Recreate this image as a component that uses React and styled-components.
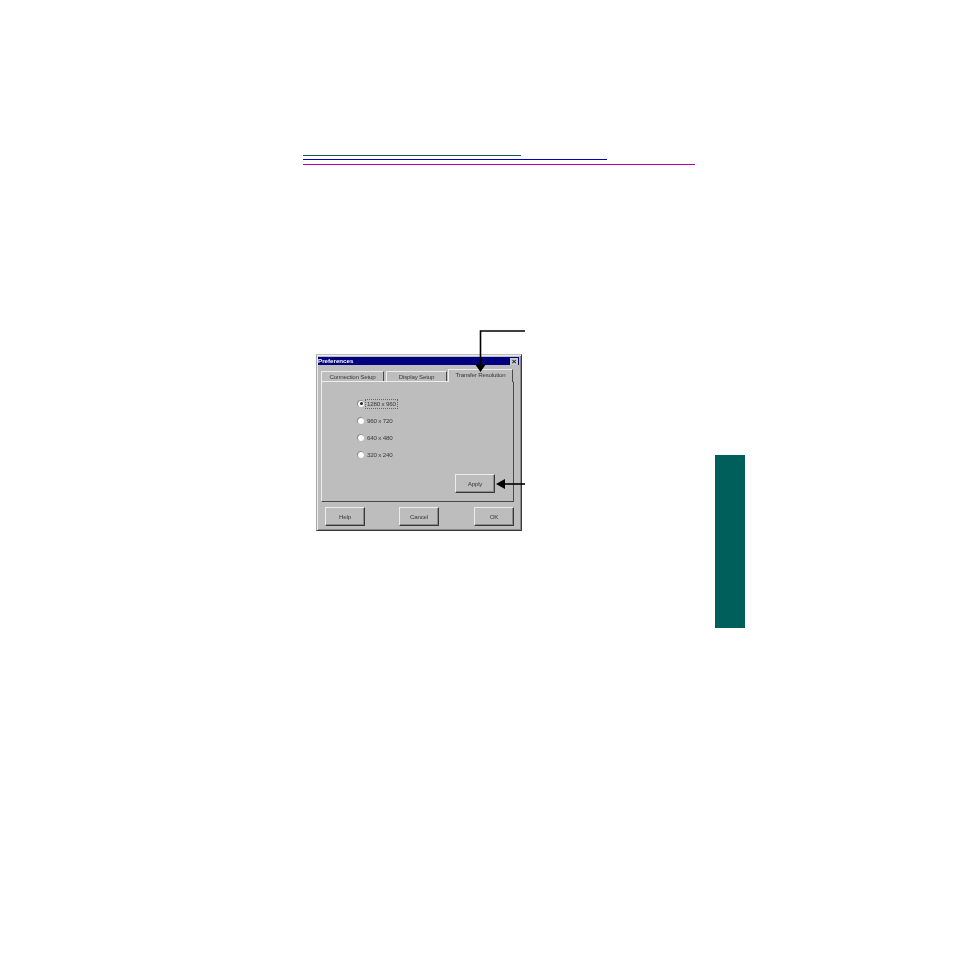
import React from "react";
import styled, { createGlobalStyle } from "styled-components";

const GlobalStyle = createGlobalStyle`
  * { box-sizing: border-box; }
  html, body { margin: 0; background: #fff; }
  body { font-family: "Liberation Sans", Arial, sans-serif; }
`;

const Page = styled.div`
  width: 954px;
  height: 954px;
  padding: 155px 0 0 303px;
  overflow: hidden;
`;

const Rules = styled.div`
  display: flex;
  flex-direction: column;
  align-items: flex-start;
`;

const Rule = styled.div`
  height: 1px;
  width: ${props => props.$width}px;
  background: ${props => props.$color};
  margin-top: ${props => props.$gap || 0}px;
`;

const Body = styled.div`
  display: flex;
  align-items: flex-start;
  margin-top: 189px;
  padding-left: 13px;
`;

const Figure = styled.div`
  position: relative;
  width: 206px;
  height: 177px;
  margin-right: 193px;
`;

const SideTab = styled.div`
  width: 30px;
  height: 173px;
  margin-top: 101px;
  background: #005f5b;
`;

const Window = styled.div`
  width: 206px;
  height: 177px;
  background: #bdbdbd;
  border: 1px solid;
  border-color: #bdbdbd #383838 #383838 #a8a8a8;
  box-shadow: inset 1px 1px 0 #ececec, inset -1px -1px 0 #8a8a8a;
  padding: 2px 2px 0 1px;
  display: flex;
  flex-direction: column;
  color: #3a3a3a;
  font-size: 6.2px;
  letter-spacing: -0.2px;
`;

const TitleBar = styled.div`
  height: 8px;
  flex: none;
  background: #000080;
  color: #fff;
  font-size: 6.2px;
  font-weight: bold;
  letter-spacing: 0;
  line-height: 8px;
  display: flex;
  justify-content: space-between;
  align-items: center;
  padding: 0 1px 0 0;
  filter: blur(0.3px);
`;

const CloseBox = styled.div`
  width: 8px;
  height: 7px;
  background: #c8c8c8;
  color: #111;
  font-size: 8px;
  font-weight: bold;
  line-height: 7px;
  text-align: center;
`;

const TabRow = styled.div`
  display: flex;
  align-items: flex-end;
  height: 16px;
  flex: none;
  padding-left: 3px;
`;

const Tab = styled.div`
  width: ${props => props.$width}px;
  height: ${props => (props.$active ? 13 : 10)}px;
  margin-right: ${props => props.$gap || 0}px;
  margin-bottom: ${props => (props.$active ? -1 : 0)}px;
  background: #bdbdbd;
  border-top: 1px solid #ececec;
  border-left: 1px solid #ececec;
  border-right: 1px solid #484848;
  display: flex;
  justify-content: center;
  align-items: ${props => (props.$active ? "flex-start" : "center")};
  padding-top: ${props => (props.$active ? 1 : 0)}px;
  white-space: nowrap;
  line-height: 8px;
  position: relative;
  filter: blur(0.3px);
`;

const Panel = styled.div`
  width: 193px;
  height: 121px;
  margin-left: 3px;
  flex: none;
  border: 1px solid;
  border-color: #ececec #484848 #484848 #ececec;
  display: flex;
  flex-direction: column;
  padding: 13px 18px 0 36px;
`;

const RadioRow = styled.div`
  display: flex;
  align-items: center;
  height: 17px;
  gap: 2px;
  filter: blur(0.3px);
`;

const Radio = styled.span`
  position: relative;
  width: 6px;
  height: 6px;
  flex: none;
  border-radius: 50%;
  background: #fff;
  box-shadow: -0.5px -0.5px 0 0.3px #808080;
  &::after {
    content: "";
    display: ${props => (props.$checked ? "block" : "none")};
    position: absolute;
    left: 1.5px;
    top: 1.5px;
    width: 3px;
    height: 3px;
    border-radius: 50%;
    background: #222;
  }
`;

const RadioLabel = styled.span`
  white-space: nowrap;
  padding: 0 1px;
  line-height: 8px;
  outline: ${props => (props.$focused ? "1px dotted #666" : "none")};
`;

const Button = styled.div`
  width: 40px;
  height: 19px;
  background: #bdbdbd;
  border: 1px solid;
  border-color: #ececec #383838 #383838 #ececec;
  box-shadow: inset -1px -1px 0 #8a8a8a;
  display: flex;
  align-items: center;
  justify-content: center;
  flex: none;
  span { filter: blur(0.3px); }
`;

const ApplyRow = styled.div`
  display: flex;
  justify-content: flex-end;
  margin-top: 11px;
`;

const Footer = styled.div`
  display: grid;
  grid-template-columns: 74px 75px 40px;
  padding: 5px 0 0 7px;
`;

const Callout = styled.svg`
  position: absolute;
  left: ${props => props.$left}px;
  top: ${props => props.$top}px;
`;

export default function App() {
  return (
    <Page>
      <GlobalStyle />
      <Rules>
        <Rule $width={218} $color="#0e5a50" />
        <Rule $width={304} $color="#0000c0" $gap={3} />
        <Rule $width={392} $color="#b000a0" $gap={4} />
      </Rules>
      <Body>
        <Figure>
          <Window>
            <TitleBar>
              <span>Preferences</span>
              <CloseBox>×</CloseBox>
            </TitleBar>
            <TabRow>
              <Tab $width={63} $gap={2}>Connection Setup</Tab>
              <Tab $width={61} $gap={1}>Display Setup</Tab>
              <Tab $width={65} $active>Transfer Resolution</Tab>
            </TabRow>
            <Panel>
              <RadioRow>
                <Radio $checked />
                <RadioLabel $focused>1280 x 960</RadioLabel>
              </RadioRow>
              <RadioRow>
                <Radio />
                <RadioLabel>960 x 720</RadioLabel>
              </RadioRow>
              <RadioRow>
                <Radio />
                <RadioLabel>640 x 480</RadioLabel>
              </RadioRow>
              <RadioRow>
                <Radio />
                <RadioLabel>320 x 240</RadioLabel>
              </RadioRow>
              <ApplyRow>
                <Button><span>Apply</span></Button>
              </ApplyRow>
            </Panel>
            <Footer>
              <Button><span>Help</span></Button>
              <Button><span>Cancel</span></Button>
              <Button><span>OK</span></Button>
            </Footer>
          </Window>
          <Callout $left={158} $top={-26} width="54" height="46" viewBox="0 0 54 46">
            <path d="M51 3H6.5V38" fill="none" stroke="#000" strokeWidth="1.6" />
            <path d="M1 36H12L6.5 44Z" fill="#000" />
          </Callout>
          <Callout $left={179} $top={122} width="32" height="16" viewBox="0 0 32 16">
            <path d="M30 8H8" fill="none" stroke="#000" strokeWidth="1.6" />
            <path d="M1 8L10 3V13Z" fill="#000" />
          </Callout>
        </Figure>
        <SideTab />
      </Body>
    </Page>
  );
}
